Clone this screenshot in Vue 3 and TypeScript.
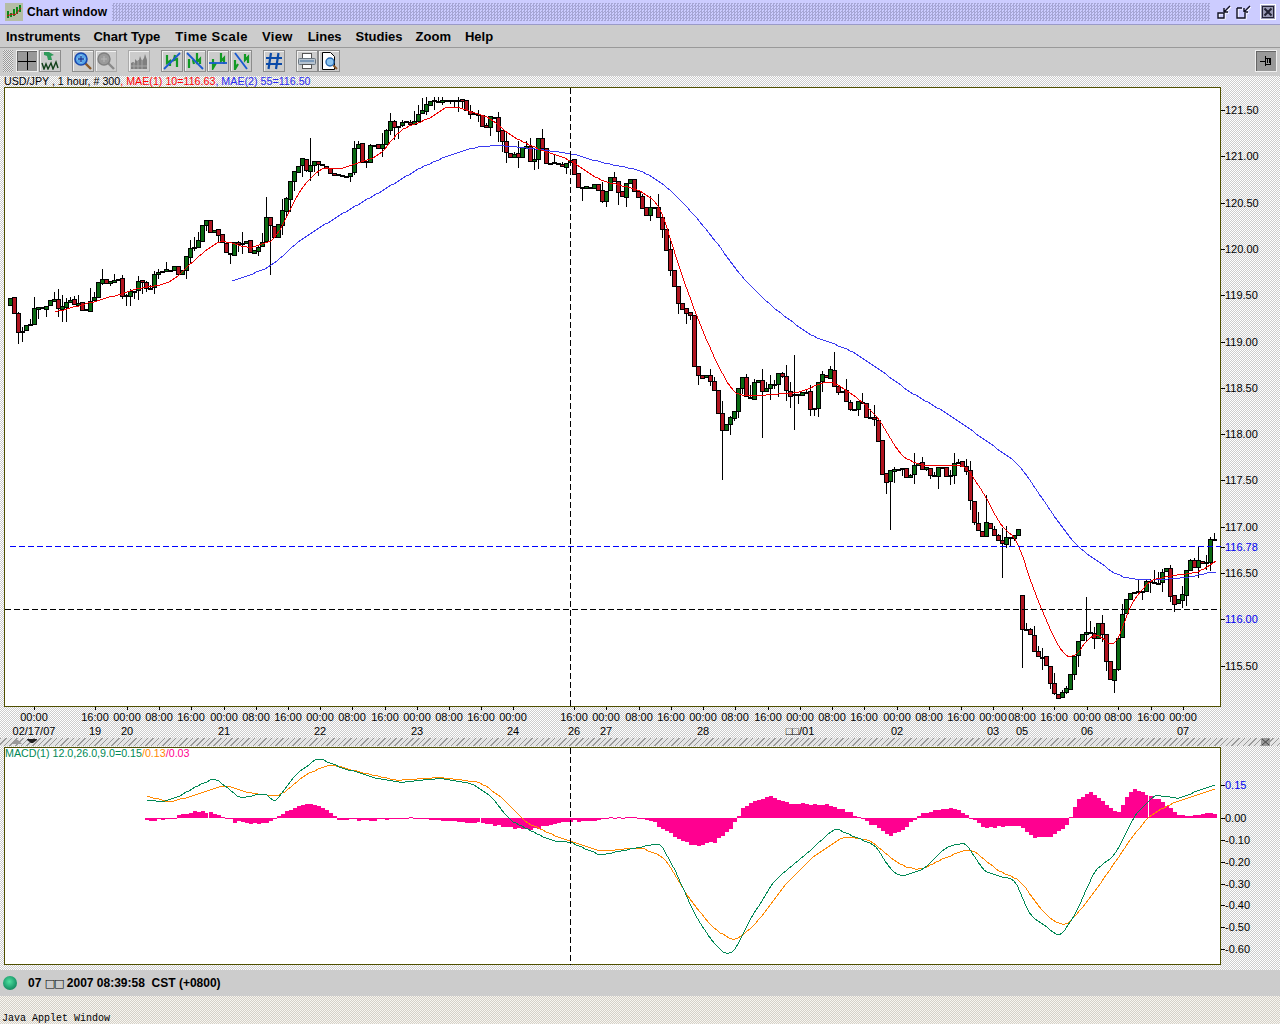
<template>
  <div class="window">
    <!-- Title bar -->
    <div class="title-bar">
      <svg class="app-icon" width="18" height="18" viewBox="0 0 18 18">
        <rect width="18" height="18" fill="#b5bda5" />
        <path d="M3 15V8M6 14V10M9 13V6M12 11V4M15 9V2" stroke="#0a8a1a" stroke-width="2" fill="none" />
        <path d="M2 13L7 11L10 12L16 5" stroke="#d01010" stroke-width="1" fill="none" />
      </svg>
      <span class="title-text">Chart window</span>
      <div class="title-fill"></div>
      <div class="win-buttons">
        <svg width="16" height="16" viewBox="0 0 16 16" class="win-btn">
          <path d="M2 9h6v5H2zM8 8l6-6M8 8V4M8 8h4" transform="translate(1 1)" fill="none" stroke="#fff" stroke-width="1.2" />
          <path d="M2 9h6v5H2zM8 8l6-6M8 8V4M8 8h4" fill="none" stroke="#112" stroke-width="1.4" />
        </svg>
        <svg width="16" height="16" viewBox="0 0 16 16" class="win-btn">
          <path d="M2 4h5M2 4v10h8V9M9 8l6-6M9 8V4M9 8h4" transform="translate(1 1)" fill="none" stroke="#fff" stroke-width="1.2" />
          <path d="M2 4h5M2 4v10h8V9M9 8l6-6M9 8V4M9 8h4" fill="none" stroke="#112" stroke-width="1.4" />
        </svg>
        <svg width="16" height="16" viewBox="0 0 16 16" class="win-close">
          <rect x="0.5" y="0.5" width="15" height="15" fill="#9a9ab4" stroke="#fff" />
          <rect x="2.5" y="2.5" width="11" height="11" fill="none" stroke="#223" />
          <path d="M4.5 4.5l7 7M11.5 4.5l-7 7" stroke="#223" stroke-width="2" />
        </svg>
      </div>
    </div>

    <!-- Menu -->
    <nav class="menu-bar">
      <span v-for="item in menuItems" :key="item">{{ item }}</span>
    </nav>

    <!-- Toolbar -->
    <div class="tool-bar">
      <div class="grip"></div>
      <button class="tool pressed">
        <svg width="18" height="18" viewBox="0 0 18 18"><path d="M9 0v18M0 9h18" stroke="#000" stroke-width="1" shape-rendering="crispEdges" /></svg>
      </button>
      <button class="tool">
        <svg width="18" height="18" viewBox="0 0 18 18">
          <path d="M3 0h5l5 3-3 1 1 4H7L6 4 3 3z" fill="#2f9a5a" />
          <path d="M1 11l2 6 2-5 2 5 3-6 2 6 3-7 2 6" fill="none" stroke="#123f1a" stroke-width="1.4" />
        </svg>
      </button>
      <button class="tool gap-l">
        <svg width="18" height="18" viewBox="0 0 18 18">
          <path d="M11 11l6 6" stroke="#8a5a2a" stroke-width="2.4" />
          <circle cx="7" cy="7" r="6" fill="#5aa6e6" stroke="#1a4ab0" stroke-width="1.6" />
          <path d="M7 3.5v7M3.5 7h7" stroke="#fff" stroke-width="1" />
          <path d="M7 4v6M4 7h6" stroke="#123a9a" stroke-width="1.4" />
        </svg>
      </button>
      <button class="tool disabled">
        <svg width="18" height="18" viewBox="0 0 18 18">
          <path d="M11 11l6 6" stroke="#8a8a8a" stroke-width="2.4" />
          <circle cx="7" cy="7" r="6" fill="#9a9a9a" stroke="#808080" stroke-width="1.4" />
          <path d="M4 7h6M7 4v6" stroke="#b8b8b8" stroke-width="1" />
        </svg>
      </button>
      <button class="tool disabled gap-l">
        <svg width="18" height="18" viewBox="0 0 18 18">
          <path d="M1 17V11L3 10L5 11V7L7 9L9 8L10 4L12 9L14 6L15 2L17 8V17Z" fill="#7f7f7f" />
          <path d="M1 14h16M4 11v6M8 9v8M12 9v8" stroke="#a8a8a8" stroke-width="1" />
        </svg>
      </button>
      <div class="line-tools">
        <button v-for="tool in lineTools" :key="tool.line" class="tool">
          <svg width="18" height="18" viewBox="0 0 18 18">
            <path :d="tool.bars" fill="none" stroke="#129a24" stroke-width="2.2" />
            <path :d="tool.line" stroke="#1a5ad0" stroke-width="1.8" fill="none" />
          </svg>
        </button>
      </div>
      <button class="tool gap-l">
        <svg width="18" height="18" viewBox="0 0 18 18">
          <path d="M6 1L3.5 17M13.5 1L11 17M1 6h16M1 12h16" stroke="#0a4aa8" stroke-width="2.2" />
        </svg>
      </button>
      <button class="tool gap-l">
        <svg width="18" height="18" viewBox="0 0 18 18">
          <rect x="4.5" y="1.5" width="9" height="6" fill="#fff" stroke="#555" />
          <rect x="0.5" y="6.5" width="17" height="6" rx="1" fill="#b8c4d0" stroke="#6a7680" />
          <path d="M2 9h14" stroke="#7a98b8" stroke-width="2" />
          <rect x="4.5" y="12.5" width="9" height="4" fill="#fff" stroke="#555" />
        </svg>
      </button>
      <button class="tool preview">
        <svg width="18" height="18" viewBox="0 0 18 18">
          <path d="M2.5.5h8l4 4v13h-12z" fill="#fff" stroke="#000" />
          <path d="M13 13l4 4" stroke="#8a5a2a" stroke-width="2" />
          <circle cx="10" cy="10" r="4" fill="#8cc4ee" stroke="#2a6ab0" stroke-width="1.4" />
        </svg>
      </button>
      <button class="tool pressed pin">
        <svg width="18" height="18" viewBox="0 0 18 18">
          <path d="M3 9h5M8 4v10M8 6h5v6H8M10 7v4M12 7v4" stroke="#000" stroke-width="1" fill="none" shape-rendering="crispEdges" />
        </svg>
      </button>
    </div>

    <!-- Price chart -->
    <svg class="pane" width="1280" height="662" viewBox="0 76 1280 662">
      <text x="4" y="85" class="label legend"><tspan fill="#000">USD/JPY , 1 hour, # 300</tspan><tspan fill="#f00">, MAE(1) 10=116.63</tspan><tspan fill="#2a2af0">, MAE(2) 55=116.50</tspan></text>
      <rect x="4.5" y="87.5" width="1216" height="619" fill="#fff" stroke="#4f4f00" shape-rendering="crispEdges" />

      <path :d="wickPath" stroke="#000" fill="none" shape-rendering="crispEdges" />
      <rect
        v-for="c in candles"
        :key="c.x"
        :x="c.x - 1.5"
        :y="c.top + 0.5"
        width="4"
        :height="c.height"
        :fill="c.up ? '#0a6a12' : '#b01420'"
        stroke="#000"
        shape-rendering="crispEdges"
      />

      <polyline :points="maSlow" fill="none" stroke="#3a3af0" shape-rendering="crispEdges" />
      <polyline :points="maFast" fill="none" stroke="#f00000" shape-rendering="crispEdges" />

      <line x1="10" y1="546.5" x2="1221" y2="546.5" stroke="#0000ff" stroke-dasharray="6 3" shape-rendering="crispEdges" />
      <line x1="5" y1="609.5" x2="1221" y2="609.5" stroke="#000" stroke-dasharray="6 3" shape-rendering="crispEdges" />
      <line x1="570.5" y1="88" x2="570.5" y2="707" stroke="#000" stroke-dasharray="6 3" shape-rendering="crispEdges" />

      <g v-for="p in priceLabels" :key="p.text">
        <line x1="1221" :y1="p.y + 0.5" x2="1225" :y2="p.y + 0.5" stroke="#000" shape-rendering="crispEdges" />
        <text x="1225" :y="p.y + 4" class="label" :fill="p.blue ? '#0000f0' : '#000'">{{ p.text }}</text>
      </g>

      <g v-for="t in timeLabels" :key="t.x">
        <line :x1="t.x + 0.5" y1="707" :x2="t.x + 0.5" y2="710" stroke="#000" shape-rendering="crispEdges" />
        <text :x="t.x" y="721" class="label" text-anchor="middle">{{ t.time }}</text>
        <text v-if="t.date" :x="t.x" y="735" class="label" text-anchor="middle">{{ t.date }}</text>
      </g>
    </svg>

    <!-- Pane divider -->
    <div class="divider">
      <svg class="divider-arrows" width="26" height="8" viewBox="0 0 26 8">
        <path d="M0 6L4 2H6L10 6Z" fill="#9a9a9a" />
        <path d="M15 1H25V2L21 5H19L15 2Z" fill="#222" />
      </svg>
      <svg class="divider-close" width="9" height="8" viewBox="0 0 9 8">
        <rect width="9" height="8" fill="#999" />
        <path d="M1 1l7 6M8 1L1 7" stroke="#444" />
      </svg>
    </div>

    <!-- MACD -->
    <svg class="pane" width="1280" height="224" viewBox="0 746 1280 224">
      <rect x="4.5" y="747.5" width="1216" height="217" fill="#fff" stroke="#4f4f00" shape-rendering="crispEdges" />
      <text x="5" y="757" class="label legend"><tspan fill="#008855">MACD(1) 12.0,26.0,9.0=0.15</tspan><tspan fill="#ff8800">/0.13</tspan><tspan fill="#ff0090">/0.03</tspan></text>

      <rect
        v-for="b in histogram"
        :key="b.x"
        :x="b.x"
        :y="b.y"
        :width="b.width"
        :height="b.height"
        fill="#ff0090"
        shape-rendering="crispEdges"
      />
      <polyline :points="macdSignal" fill="none" stroke="#ff8800" shape-rendering="crispEdges" />
      <polyline :points="macdLine" fill="none" stroke="#008855" shape-rendering="crispEdges" />
      <line x1="570.5" y1="748" x2="570.5" y2="965" stroke="#000" stroke-dasharray="6 3" shape-rendering="crispEdges" />

      <g v-for="p in macdLabels" :key="p.text">
        <line x1="1221" :y1="p.y + 0.5" x2="1225" :y2="p.y + 0.5" stroke="#000" shape-rendering="crispEdges" />
        <text x="1225" :y="p.y + 4" class="label" :fill="p.blue ? '#0000f0' : '#000'">{{ p.text }}</text>
      </g>
    </svg>

    <!-- Status -->
    <div class="status-bar">
      <span class="ball"></span>
      <span class="status-text">07 <span class="tofu">□□</span> 2007 08:39:58&nbsp; CST (+0800)</span>
    </div>
    <div class="applet-bar">Java Applet Window</div>
  </div>
</template>

<script setup lang="ts">
type Point = [number, number]

interface Candle {
  x: number
  top: number
  height: number
  up: boolean
  wickTop: number
  wickBottom: number
}

const menuItems = ['Instruments', 'Chart Type', 'Time Scale', 'View', 'Lines', 'Studies', 'Zoom', 'Help']

const lineTools = [
  { line: 'M1 17L17 1', bars: 'M4 3v8l3-2v5M12 3l-1 5 3-1v8' },
  { line: 'M1 1L17 17', bars: 'M3 7v9M7 8l1 4M11 1v9l3-3v5' },
  { line: 'M0 11H18', bars: 'M4 7v9l3-5M12 1v8l3-3v6' },
  { line: 'M3 1L15 17', bars: 'M3 8v9l3-5M13 2v6l3-3v6' }
]

// close price read off the reference, as pixel positions
const closePath: Point[] = [
  [10, 305], [14, 320], [30, 316], [50, 310], [70, 302], [90, 300], [100, 290], [120, 284], [135, 283],
  [148, 288], [170, 280], [185, 265], [195, 245], [205, 228], [215, 224], [225, 240], [240, 248], [255, 240],
  [268, 225], [272, 245], [285, 205], [295, 180], [305, 160], [312, 150], [325, 158], [345, 168], [360, 153],
  [380, 152], [390, 130], [410, 125], [430, 108], [445, 110], [458, 104], [470, 114], [497, 120], [507, 145],
  [520, 155], [538, 150], [545, 168], [558, 168], [568, 160], [575, 185], [590, 190], [600, 205], [610, 182],
  [622, 195], [635, 182], [645, 205], [660, 208], [665, 235], [672, 270], [680, 305], [690, 315], [693, 365],
  [705, 372], [715, 385], [722, 435], [735, 415], [740, 385], [755, 395], [765, 385], [780, 385], [790, 400],
  [815, 400], [830, 370], [840, 385], [850, 410], [875, 415], [882, 465], [890, 480], [905, 475], [925, 465],
  [945, 465], [965, 462], [975, 515], [985, 530], [995, 545], [1002, 555], [1012, 542], [1018, 540], [1022, 640],
  [1026, 635], [1040, 650], [1050, 670], [1058, 690], [1065, 680], [1072, 655], [1080, 625], [1090, 620],
  [1100, 635], [1106, 660], [1112, 688], [1116, 655], [1122, 610], [1130, 580], [1140, 578], [1160, 580],
  [1165, 565], [1172, 595], [1180, 595], [1190, 572], [1197, 555], [1205, 563], [1210, 545], [1218, 547]
]

const longWicks: Record<number, [number?, number?]> = {
  22: [undefined, 342], 66: [298, 322], 270: [undefined, 275], 266: [197, undefined], 310: [138, undefined],
  506: [undefined, 163], 722: [undefined, 480], 762: [undefined, 438], 794: [355, 430], 834: [352, undefined],
  890: [undefined, 530], 986: [495, undefined], 1002: [undefined, 578], 1022: [607, 668], 1086: [597, undefined],
  1210: [537, undefined]
}

const fastPath: Point[] = [
  [55, 312], [100, 300], [140, 288], [170, 283], [200, 255], [220, 240], [250, 248], [275, 240], [300, 190],
  [320, 168], [345, 168], [380, 155], [400, 130], [430, 118], [450, 105], [490, 118], [510, 135], [540, 150],
  [570, 160], [600, 180], [640, 190], [660, 205], [680, 270], [700, 325], [720, 370], [735, 395], [760, 395],
  [800, 392], [830, 380], [860, 400], [880, 420], [900, 455], [920, 465], [965, 465], [985, 495], [1000, 525],
  [1018, 540], [1030, 580], [1050, 630], [1063, 655], [1075, 658], [1090, 635], [1100, 635], [1115, 650],
  [1130, 605], [1150, 580], [1175, 575], [1200, 572], [1216, 560]
]

const slowPath: Point[] = [
  [232, 282], [272, 266], [300, 240], [340, 215], [380, 192], [420, 168], [450, 155], [480, 146], [500, 145],
  [530, 148], [570, 153], [600, 162], [640, 170], [665, 185], [690, 210], [715, 240], [740, 275], [770, 305],
  [810, 335], [850, 350], [880, 370], [910, 392], [950, 415], [985, 440], [1020, 465], [1050, 510], [1075, 545],
  [1100, 563], [1120, 577], [1150, 580], [1190, 577], [1216, 571]
]

const macdPath: Point[] = [
  [147, 800], [165, 801], [178, 797], [195, 787], [215, 778], [240, 798], [265, 793], [275, 803], [295, 775],
  [318, 758], [340, 767], [375, 778], [400, 782], [440, 778], [470, 783], [490, 795], [510, 820], [530, 830],
  [550, 840], [570, 842], [600, 855], [625, 850], [660, 843], [675, 870], [695, 915], [710, 938], [725, 955],
  [735, 950], [750, 920], [775, 880], [805, 855], [835, 828], [850, 835], [875, 845], [893, 873], [905, 876],
  [925, 868], [945, 848], [965, 842], [985, 872], [1015, 880], [1030, 915], [1060, 937], [1075, 915], [1095, 870],
  [1115, 855], [1135, 815], [1155, 795], [1180, 798], [1200, 790], [1217, 784]
]

const signalPath: Point[] = [
  [147, 796], [170, 802], [195, 795], [225, 785], [250, 793], [280, 796], [305, 775], [330, 764], [360, 772],
  [395, 780], [440, 777], [480, 782], [505, 800], [525, 822], [560, 838], [600, 851], [640, 847], [665, 858],
  [690, 900], [715, 930], [735, 941], [755, 925], [785, 885], [815, 855], [845, 836], [870, 840], [900, 865],
  [920, 870], [945, 858], [970, 848], [1000, 872], [1020, 880], [1045, 915], [1065, 927], [1085, 905], [1110, 870],
  [1130, 840], [1150, 815], [1175, 802], [1217, 788]
]

const histPath: Point[] = [
  [145, -3], [170, -1], [180, 3], [200, 7], [215, 5], [235, -4], [255, -5], [270, -4], [280, 2], [300, 13],
  [315, 14], [330, 7], [340, -2], [380, -2], [400, 0], [430, -1], [460, -4], [490, -6], [510, -10], [530, -12],
  [555, -6], [570, -3], [590, -4], [610, 0], [630, 2], [650, -2], [665, -12], [680, -22], [695, -28], [715, -24],
  [730, -12], [745, 12], [770, 22], [790, 15], [810, 14], [830, 13], [850, 6], [870, -5], [890, -18], [905, -10],
  [920, 3], [945, 10], [960, 8], [985, -10], [1005, -8], [1020, -8], [1035, -20], [1050, -19], [1065, -10],
  [1080, 20], [1092, 26], [1105, 15], [1118, 5], [1133, 30], [1150, 22], [1165, 15], [1178, 3], [1195, 3], [1217, 5]
]

// bars with a one pixel white slit after them
const histSlits = [205, 477, 1145]

const interp = (path: Point[], x: number): number => {
  if (x <= path[0][0]) return path[0][1]
  for (let i = 1; i < path.length; i++) {
    if (x <= path[i][0]) {
      const [x0, y0] = path[i - 1]
      const [x1, y1] = path[i]
      return y0 + ((y1 - y0) * (x - x0)) / (x1 - x0)
    }
  }
  return path[path.length - 1][1]
}

let seed = 20070307
const rand = () => {
  seed = (seed + 0x6d2b79f5) | 0
  let t = Math.imul(seed ^ (seed >>> 15), 1 | seed)
  t = (t + Math.imul(t ^ (t >>> 7), 61 | t)) ^ t
  return ((t ^ (t >>> 14)) >>> 0) / 4294967296
}

const buildCandles = (): Candle[] => {
  const out: Candle[] = []
  let prev = closePath[0][1]
  let offset = 0
  for (let i = 0; i < 302; i++) {
    const x = 10 + 4 * i
    // hold the offset for a bar: a tall body, then a flat one, like the real series
    if (i % 2 === 0) offset = (rand() - 0.5) * 26
    const close = Math.max(Math.round(interp(closePath, x) + offset), 100)
    let open = prev + Math.round((rand() - 0.5) * 2)
    // the weekend gap opens near the new price, not at the old close
    if (Math.abs(open - close) > 60) open = close - Math.sign(close - open) * 34
    const top = Math.min(open, close)
    const bottom = Math.max(open, close)
    const wick = longWicks[x] ?? []
    const upper = rand() < 0.45 ? Math.round(rand() * 13) : 0
    const lower = rand() < 0.45 ? Math.round(rand() * 13) : 0
    out.push({
      x,
      top,
      height: Math.max(bottom - top, 1),
      up: close < open,
      wickTop: wick[0] ?? Math.max(top - upper, 97),
      wickBottom: wick[1] ?? Math.min(bottom + lower, 695)
    })
    prev = close
  }
  return out
}

const candles = buildCandles()
const wickPath = candles.map((c) => `M${c.x + 0.5} ${c.wickTop}V${c.wickBottom}`).join('')

// sample the hand-read points every 3px and round the corners off
const toCurve = (path: Point[], win: number) => {
  const first = path[0][0]
  const last = path[path.length - 1][0]
  const pts: string[] = []
  for (let x = first; x <= last; x += 3) {
    let sum = 0
    for (let k = -win; k <= win; k++) sum += interp(path, x + k * 3)
    pts.push(`${x},${Math.round(sum / (2 * win + 1))}`)
  }
  return pts.join(' ')
}

const maFast = toCurve(fastPath, 2)
const maSlow = toCurve(slowPath, 3)
const macdLine = toCurve(macdPath, 1)
const macdSignal = toCurve(signalPath, 2)

const histogram = Array.from({ length: 268 }, (_, i) => {
  const x = 145 + 4 * i
  const h = Math.round(interp(histPath, x + 2) + (rand() - 0.5) * 2)
  return {
    x,
    y: h >= 0 ? 818 - h : 818,
    width: histSlits.includes(x) ? 3 : 4,
    height: Math.max(Math.abs(h), 1)
  }
})

const priceLabels = [
  { text: '121.50', y: 110 }, { text: '121.00', y: 156 }, { text: '120.50', y: 203 }, { text: '120.00', y: 249 },
  { text: '119.50', y: 295 }, { text: '119.00', y: 342 }, { text: '118.50', y: 388 }, { text: '118.00', y: 434 },
  { text: '117.50', y: 480 }, { text: '117.00', y: 527 }, { text: '116.78', y: 547, blue: true }, { text: '116.50', y: 573 },
  { text: '116.00', y: 619, blue: true }, { text: '115.50', y: 666 }
]

const macdLabels = [
  { text: '0.15', y: 785, blue: true }, { text: '0.00', y: 818 }, { text: '-0.10', y: 840 }, { text: '-0.20', y: 862 },
  { text: '-0.30', y: 884 }, { text: '-0.40', y: 905 }, { text: '-0.50', y: 927 }, { text: '-0.60', y: 949 }
]

const timeLabels: { x: number; time: string; date?: string }[] = [
  { x: 34, time: '00:00', date: '02/17/07' }, { x: 95, time: '16:00', date: '19' }, { x: 127, time: '00:00', date: '20' },
  { x: 159, time: '08:00' }, { x: 191, time: '16:00' }, { x: 224, time: '00:00', date: '21' }, { x: 256, time: '08:00' },
  { x: 288, time: '16:00' }, { x: 320, time: '00:00', date: '22' }, { x: 352, time: '08:00' }, { x: 385, time: '16:00' },
  { x: 417, time: '00:00', date: '23' }, { x: 449, time: '08:00' }, { x: 481, time: '16:00' }, { x: 513, time: '00:00', date: '24' },
  { x: 574, time: '16:00', date: '26' }, { x: 606, time: '00:00', date: '27' }, { x: 639, time: '08:00' }, { x: 671, time: '16:00' },
  { x: 703, time: '00:00', date: '28' }, { x: 735, time: '08:00' }, { x: 768, time: '16:00' }, { x: 800, time: '00:00', date: '□□/01' },
  { x: 832, time: '08:00' }, { x: 864, time: '16:00' }, { x: 897, time: '00:00', date: '02' }, { x: 929, time: '08:00' },
  { x: 961, time: '16:00' }, { x: 993, time: '00:00', date: '03' }, { x: 1022, time: '08:00', date: '05' }, { x: 1054, time: '16:00' },
  { x: 1087, time: '00:00', date: '06' }, { x: 1118, time: '08:00' }, { x: 1151, time: '16:00' }, { x: 1183, time: '00:00', date: '07' }
]
</script>

<style>
html,
body {
  margin: 0;
  background: #fff;
}
</style>

<style scoped>
.window {
  width: 1280px;
  height: 1024px;
  overflow: hidden;
  display: flex;
  flex-direction: column;
  font-family: "Liberation Sans", Arial, sans-serif;
  background: repeating-conic-gradient(#cccccc 0 25%, #ffffff 0 50%) 0 0 / 2px 2px;
}

.title-bar {
  height: 24px;
  flex: none;
  display: flex;
  align-items: center;
  padding-left: 5px;
  background: #ccccff;
  border-bottom: 1px solid #9a9ac8;
}

.app-icon {
  flex: none;
}

.title-text {
  margin-left: 4px;
  font-size: 12px;
  font-weight: 700;
  letter-spacing: 0.12px;
  color: #000;
}

.title-fill {
  flex: 1;
  height: 18px;
  margin: 0 6px 0 5px;
  background: repeating-conic-gradient(#a6a6d4 0 25%, #ccccff 0 50%) 0 0 / 3px 3px;
}

.win-buttons {
  display: flex;
  align-items: center;
  padding-right: 4px;
}

.win-btn {
  margin-right: 3px;
}

.win-close {
  margin-left: 6px;
}

.menu-bar {
  height: 22px;
  flex: none;
  display: flex;
  align-items: center;
  gap: 14px;
  padding-left: 6px;
  background: #cccccc;
  font-size: 13px;
  font-weight: 700;
  color: #000;
  box-sizing: border-box;
}

.menu-bar span:nth-child(2) {
  margin-left: -1px;
}

.menu-bar span:nth-child(3) {
  margin-left: 1px;
  letter-spacing: 0.5px;
}

.menu-bar span:nth-child(4) {
  letter-spacing: 0.3px;
}

.menu-bar span:nth-child(5) {
  margin-left: 1px;
}

.menu-bar span:nth-child(7) {
  margin-left: -1px;
}

.tool-bar {
  height: 29px;
  flex: none;
  display: flex;
  align-items: center;
  box-sizing: border-box;
  padding: 0 3px 3px 3px;
  background: #cccccc;
  border-top: 1px solid #999999;
}

.grip {
  width: 10px;
  height: 22px;
  margin-right: 2px;
  background: repeating-conic-gradient(#999999 0 25%, #e8e8e8 0 50%) 0 0 / 2px 2px;
}

.tool {
  width: 22px;
  height: 22px;
  padding: 0;
  margin: 0 0 0 1px;
  flex: none;
  display: flex;
  align-items: center;
  justify-content: center;
  background: #cccccc;
  border: 1px solid #8c8c8c;
  box-shadow: inset 1px 1px 0 #f2f2f2;
  box-sizing: border-box;
}

.tool.pressed {
  background: #999999;
  border-color: #eeeeee;
  box-shadow: inset 1px 1px 0 #666666;
}

.tool.disabled {
  border-color: #aaaaaa;
}

.tool.gap-l {
  margin-left: 11px;
}

.tool.preview {
  margin-left: 0;
}

.tool.pin {
  margin-left: auto;
}

.line-tools {
  display: flex;
  margin-left: 10px;
}

.pane {
  display: block;
  flex: none;
}

.label {
  font-family: "Liberation Sans", Arial, sans-serif;
  font-size: 11px;
}

.legend {
  font-size: 10.7px;
}

.divider {
  height: 8px;
  flex: none;
  position: relative;
  background: repeating-linear-gradient(135deg, #999999 0 1px, #e4e4e4 1px 4px);
}

.divider-arrows {
  position: absolute;
  left: 12px;
  top: 0;
}

.divider-close {
  position: absolute;
  left: 1261px;
  top: 0;
}

.status-bar {
  height: 26px;
  flex: none;
  display: flex;
  align-items: center;
  gap: 11px;
  padding-left: 3px;
  background: #cccccc;
}

.ball {
  width: 14px;
  height: 14px;
  border-radius: 50%;
  background: radial-gradient(circle at 45% 40%, #50e0a0 0, #20a070 55%, #0a6a48 100%);
}

.status-text {
  font-size: 12px;
  font-weight: 700;
  color: #000;
}

.tofu {
  font-family: "DejaVu Sans", sans-serif;
  font-weight: 400;
  font-size: 11px;
  letter-spacing: -1px;
}

.applet-bar {
  flex: 1;
  padding: 17px 0 0 2px;
  font-family: "Liberation Mono", monospace;
  font-size: 10px;
  line-height: 12px;
  color: #000;
  background: repeating-conic-gradient(#d4d0c8 0 25%, #f8f6f0 0 50%) 0 0 / 2px 2px;
}
</style>
